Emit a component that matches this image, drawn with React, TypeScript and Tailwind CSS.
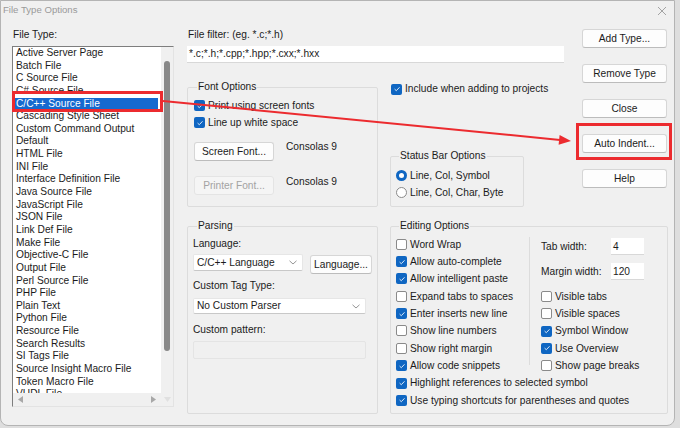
import React from "react";

const fileTypes = [
  "Active Server Page",
  "Batch File",
  "C Source File",
  "C# Source File",
  "C/C++ Source File",
  "Cascading Style Sheet",
  "Custom Command Output",
  "Default",
  "HTML File",
  "INI File",
  "Interface Definition File",
  "Java Source File",
  "JavaScript File",
  "JSON File",
  "Link Def File",
  "Make File",
  "Objective-C File",
  "Output File",
  "Perl Source File",
  "PHP File",
  "Plain Text",
  "Python File",
  "Resource File",
  "Search Results",
  "SI Tags File",
  "Source Insight Macro File",
  "Token Macro File",
  "VHDL File",
];

function Check({ on }: { on?: boolean }) {
  if (on) {
    return (
      <span className="w-[11px] h-[11px] rounded-[2px] bg-[#0f66c2] flex items-center justify-center shrink-0">
        <svg width="8" height="8" viewBox="0 0 8 8">
          <path d="M1.6 4.1 L3.3 5.7 L6.5 2.3" fill="none" stroke="#dbe9f8" strokeWidth="1" />
        </svg>
      </span>
    );
  }
  return <span className="w-[11px] h-[11px] rounded-[2px] border border-[#8a8a8a] bg-white shrink-0" />;
}

function CheckRow({ on, label }: { on?: boolean; label: string }) {
  return (
    <div className="h-[17.35px] flex items-center gap-[3px] whitespace-nowrap">
      <Check on={on} />
      <span>{label}</span>
    </div>
  );
}

function Radio({ on, label }: { on?: boolean; label: string }) {
  return (
    <div className="h-[17px] flex items-center gap-[3px] whitespace-nowrap">
      {on ? (
        <span className="w-[11px] h-[11px] rounded-full bg-[#0f66c2] flex items-center justify-center shrink-0">
          <span className="w-[5px] h-[5px] rounded-full bg-white" />
        </span>
      ) : (
        <span className="w-[11px] h-[11px] rounded-full border border-[#8a8a8a] bg-white shrink-0" />
      )}
      <span>{label}</span>
    </div>
  );
}

function Btn({
  children,
  className,
  disabled,
}: {
  children: React.ReactNode;
  className?: string;
  disabled?: boolean;
}) {
  return (
    <div
      className={`h-[19px] flex items-center justify-center rounded-[3px] border whitespace-nowrap ${
        disabled
          ? "border-[#e4e4e4] bg-[#f5f5f5] text-[#a3a3a3]"
          : "border-[#d6d6d6] border-b-[#bcbcbc] bg-[#fdfdfd] text-[#1b1b1b]"
      } ${className ?? ""}`}
    >
      {children}
    </div>
  );
}

function Chevron() {
  return (
    <svg width="8" height="5" viewBox="0 0 8 5">
      <path d="M0.5 0.8 L4 4 L7.5 0.8" fill="none" stroke="#8a8a8a" strokeWidth="0.9" />
    </svg>
  );
}

function Select({ value, className }: { value: string; className?: string }) {
  return (
    <div
      className={`flex items-center justify-between pl-[3px] pr-[5px] bg-white border border-[#e6e6e6] border-b-[#c8c8c8] rounded-[2px] whitespace-nowrap ${className ?? ""}`}
    >
      <span>{value}</span>
      <Chevron />
    </div>
  );
}

export default function App() {
  return (
    <div
      className="relative w-[680px] h-[428px] overflow-hidden bg-[#dedede] text-[10.2px] text-[#1b1b1b]"
      style={{ fontFamily: '"Liberation Sans", Arial, sans-serif' }}
    >
      <div className="w-[675px] h-[426px] bg-[#f0f0f0] border border-[#b4b4b4] rounded-b-[8px] flex flex-col">
        {/* title bar */}
        <div className="h-[24px] flex items-start justify-between pl-[2px] pr-[7px] pt-[2px]">
          <span className="leading-[14px] text-[9.6px] text-[#9a9a9a]">File Type Options</span>
          <svg width="10" height="10" viewBox="0 0 10 10" className="mt-[3px]">
            <path d="M1 1 L9 9 M9 1 L1 9" stroke="#9a9a9a" strokeWidth="0.9" />
          </svg>
        </div>

        <div className="flex pl-[11px]">
          {/* file type list */}
          <div className="w-[162px] flex flex-col">
            <div className="mt-[3px] leading-[14px] pl-[1px]">File Type:</div>
            <div className="mt-[4px] h-[361px] flex flex-col border border-[#e3e3e3] border-l-[#7e7e7e] border-t-[#7e7e7e] bg-white">
              <div className="flex flex-1 min-h-0">
                <div className="flex-1 overflow-hidden pl-[2px] pr-[3px]">
                  {fileTypes.map((t) => (
                    <div
                      key={t}
                      className={`h-[12.65px] leading-[12.65px] whitespace-nowrap pl-[1px] ${
                        t === "C/C++ Source File" ? "bg-[#1669cf] text-white" : ""
                      }`}
                    >
                      {t}
                    </div>
                  ))}
                </div>
                <div className="w-[12px] bg-[#f0f0f0] flex justify-center">
                  <div className="mt-[14px] w-[6px] h-[290px] rounded-full bg-[#888888]" />
                </div>
              </div>
              <div className="h-[13px] flex items-center bg-[#f0f0f0]">
                <div className="w-[148px] flex items-center justify-between px-[5px]">
                  <svg width="5" height="7" viewBox="0 0 5 7">
                    <path d="M5 0 L0 3.5 L5 7 Z" fill="#a8a8a8" />
                  </svg>
                  <svg width="5" height="7" viewBox="0 0 5 7">
                    <path d="M0 0 L5 3.5 L0 7 Z" fill="#a8a8a8" />
                  </svg>
                </div>
                <div className="flex-1 flex justify-center">
                  <svg width="7" height="5" viewBox="0 0 7 5">
                    <path d="M0 0 L7 0 L3.5 5 Z" fill="#e0e0e0" />
                  </svg>
                </div>
              </div>
            </div>
          </div>

          {/* right area */}
          <div className="ml-[13px] w-[481px] flex flex-col">
            <div className="flex">
              <div className="w-[377px] flex flex-col">
                <div className="mt-[3px] leading-[14px] pl-[1px]">File filter: (eg. *.c;*.h)</div>
                <div className="mt-[4px] h-[17px] bg-white border-b border-[#d8d8d8] pl-[2px] leading-[16px]">
                  *.c;*.h;*.cpp;*.hpp;*.cxx;*.hxx
                </div>
                <div className="mt-[17px] flex">
                  <fieldset className="w-[191px] h-[127px] border border-[#dcdcdc] rounded-[2px] pl-[6px]">
                    <legend className="ml-[3px] px-[1px] leading-[14px]">Font Options</legend>
                    <div className="mt-[3px] flex flex-col">
                      <div className="h-[17px] flex items-center gap-[3px]">
                        <Check on />
                        <span>Print using screen fonts</span>
                      </div>
                      <div className="h-[17px] flex items-center gap-[3px]">
                        <Check on />
                        <span>Line up white space</span>
                      </div>
                    </div>
                    <div className="mt-[11px] flex items-start">
                      <Btn className="w-[80px]">Screen Font...</Btn>
                      <span className="ml-[12px] mt-[-2px] leading-[14px]">Consolas 9</span>
                    </div>
                    <div className="mt-[15px] flex items-start">
                      <Btn className="w-[80px]" disabled>
                        Printer Font...
                      </Btn>
                      <span className="ml-[12px] mt-[-1px] leading-[14px]">Consolas 9</span>
                    </div>
                  </fieldset>
                  <div className="ml-[12px] flex flex-col">
                    <div className="h-[18px] flex items-center gap-[3px] pl-[1px] whitespace-nowrap">
                      <Check on />
                      <span>Include when adding to projects</span>
                    </div>
                    <fieldset className="mt-[51px] w-[134px] h-[58px] border border-[#dcdcdc] rounded-[2px] pl-[5px]">
                      <legend className="ml-[3px] px-[1px] leading-[14px]">Status Bar Options</legend>
                      <div className="mt-[4px]">
                        <Radio on label="Line, Col, Symbol" />
                        <Radio label="Line, Col, Char, Byte" />
                      </div>
                    </fieldset>
                  </div>
                </div>
              </div>

              {/* buttons */}
              <div className="ml-[18px] w-[85px] mt-[4px] flex flex-col gap-[16px]">
                <Btn>Add Type...</Btn>
                <Btn>Remove Type</Btn>
                <Btn>Close</Btn>
                <Btn>Auto Indent...</Btn>
                <Btn>Help</Btn>
              </div>
            </div>

            {/* bottom row */}
            <div className="mt-[12px] flex">
              <fieldset className="w-[191px] h-[195px] border border-[#dcdcdc] rounded-[2px] pl-[5px]">
                <legend className="ml-[4px] px-[1px] leading-[14px]">Parsing</legend>
                <div className="mt-[4px] leading-[14px]">Language:</div>
                <div className="mt-[3px] flex items-start">
                  <Select value="C/C++ Language" className="w-[110px] h-[17px]" />
                  <Btn className="ml-[7px] mt-[1px] w-[62px]">Language...</Btn>
                </div>
                <div className="mt-[5px] leading-[14px]">Custom Tag Type:</div>
                <Select value="No Custom Parser" className="mt-[5px] w-[173px] h-[16px]" />
                <div className="mt-[9px] leading-[14px]">Custom pattern:</div>
                <div className="mt-[4px] w-[173px] h-[18px] border border-[#e4e4e4] rounded-[2px] bg-[#f0f0f0]" />
              </fieldset>

              <fieldset className="ml-[12px] w-[278px] h-[195px] border border-[#dcdcdc] rounded-[2px] pl-[5px]">
                <legend className="ml-[3px] px-[1px] leading-[14px]">Editing Options</legend>
                <div className="mt-[2.6px] flex">
                  <div className="w-[133px] flex flex-col">
                    <CheckRow label="Word Wrap" />
                    <CheckRow on label="Allow auto-complete" />
                    <CheckRow on label="Allow intelligent paste" />
                    <CheckRow label="Expand tabs to spaces" />
                    <CheckRow on label="Enter inserts new line" />
                    <CheckRow label="Show line numbers" />
                    <CheckRow label="Show right margin" />
                    <CheckRow on label="Allow code snippets" />
                  </div>
                  <div className="mt-[1.5px] w-px h-[128px] bg-[#dcdcdc]" />
                  <div className="ml-[11px] flex flex-col">
                    <div className="h-[52.05px] flex flex-col pt-[2px]">
                      <div className="h-[17.5px] flex items-center whitespace-nowrap">
                        <span className="w-[70px]">Tab width:</span>
                        <div className="w-[33px] h-[17.5px] bg-white border-b border-[#d8d8d8] pl-[2px] leading-[17px]">4</div>
                      </div>
                      <div className="mt-[7.5px] h-[17.5px] flex items-center whitespace-nowrap">
                        <span className="w-[70px]">Margin width:</span>
                        <div className="w-[33px] h-[17.5px] bg-white border-b border-[#d8d8d8] pl-[2px] leading-[17px]">120</div>
                      </div>
                    </div>
                    <CheckRow label="Visible tabs" />
                    <CheckRow label="Visible spaces" />
                    <CheckRow on label="Symbol Window" />
                    <CheckRow on label="Use Overview" />
                    <CheckRow label="Show page breaks" />
                  </div>
                </div>
                <CheckRow on label="Highlight references to selected symbol" />
                <CheckRow on label="Use typing shortcuts for parentheses and quotes" />
              </fieldset>
            </div>
          </div>
        </div>
      </div>

      {/* annotations */}
      <div className="absolute left-[12px] top-[91px] w-[151px] h-[21px] border-[3px] border-[#ec2b2f]" />
      <div className="absolute left-[576px] top-[123px] w-[96px] h-[37px] border-[3px] border-[#ec2b2f]" />
      <svg className="absolute left-0 top-0 pointer-events-none" width="680" height="428">
        <line x1="163" y1="101" x2="560" y2="139.9" stroke="#ec2b2f" strokeWidth="2" />
        <polygon points="571,141 558.6,144.8 559.6,134.9" fill="#ec2b2f" />
      </svg>
    </div>
  );
}
